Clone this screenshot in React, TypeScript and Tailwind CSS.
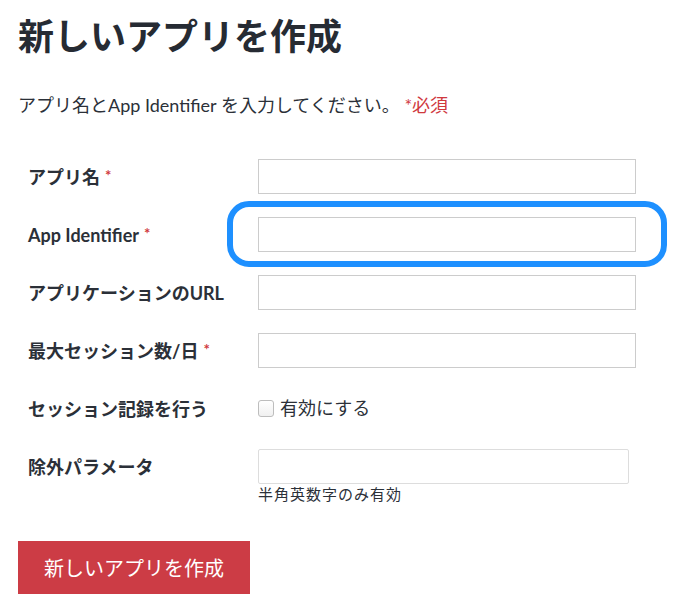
import React from "react";

const font = { fontFamily: 'Lato, "Noto Sans CJK JP", sans-serif' };

function Req() {
  return <span className="ml-[5px] relative -top-[3px] text-[15px] font-bold text-[#d0393e]">*</span>;
}

function Row({ label, req, children }: { label: string; req?: boolean; children: React.ReactNode }) {
  return (
    <div className="flex items-center h-[35px]">
      <div className="w-[230px] text-[18px] font-bold text-[#2b3038] leading-none">
        {label}
        {req && <Req />}
      </div>
      {children}
    </div>
  );
}

function Input() {
  return <div className="w-[378px] h-[35px] border border-[#cccccc] bg-white" />;
}

export default function App() {
  return (
    <div className="w-[679px] h-[613px] bg-white text-[#2b3038] overflow-hidden" style={font}>
      <div className="pl-[18px] pt-[14px]">
        <h1 className="text-[36px] leading-[44px] font-bold text-[#262b33] tracking-[0px]">新しいアプリを作成</h1>
        <p className="mt-[35px] text-[18px] leading-[24px] text-[#2b3038]">
          アプリ名とApp Identifier を入力してください。 <span className="text-[#d0393e]">*必須</span>
        </p>
      </div>
      <div className="pl-[28px] mt-[42px] flex flex-col gap-[23px]">
        <Row label="アプリ名" req>
          <Input />
        </Row>
        <Row label="App Identifier" req>
          <div className="relative">
            <Input />
            <div className="absolute -left-[31px] -top-[16px] w-[440px] h-[66px] border-[6px] border-[#1e90ff] rounded-[22px]" />
          </div>
        </Row>
        <Row label="アプリケーションのURL">
          <Input />
        </Row>
        <Row label="最大セッション数/日" req>
          <Input />
        </Row>
        <Row label="セッション記録を行う">
          <label className="flex items-center gap-[6px] text-[18px] text-[#2b3038]">
            <span className="w-[16px] h-[17px] rounded-[3px] border border-[#bdbdbd] bg-gradient-to-b from-white to-[#f0f0f0]" />
            有効にする
          </label>
        </Row>
        <div>
          <Row label="除外パラメータ">
            <div className="w-[371px] h-[35px] border border-[#dddddd] rounded-[2px] bg-white" />
          </Row>
          <div className="ml-[230px] text-[15px] leading-[20px] text-[#2b3038] tracking-[1px]">半角英数字のみ有効</div>
        </div>
      </div>
      <div className="pl-[18px] mt-[37px]">
        <button className="w-[232px] h-[53px] bg-[#cc3c45] text-white text-[20px] leading-none">
          新しいアプリを作成
        </button>
      </div>
    </div>
  );
}
